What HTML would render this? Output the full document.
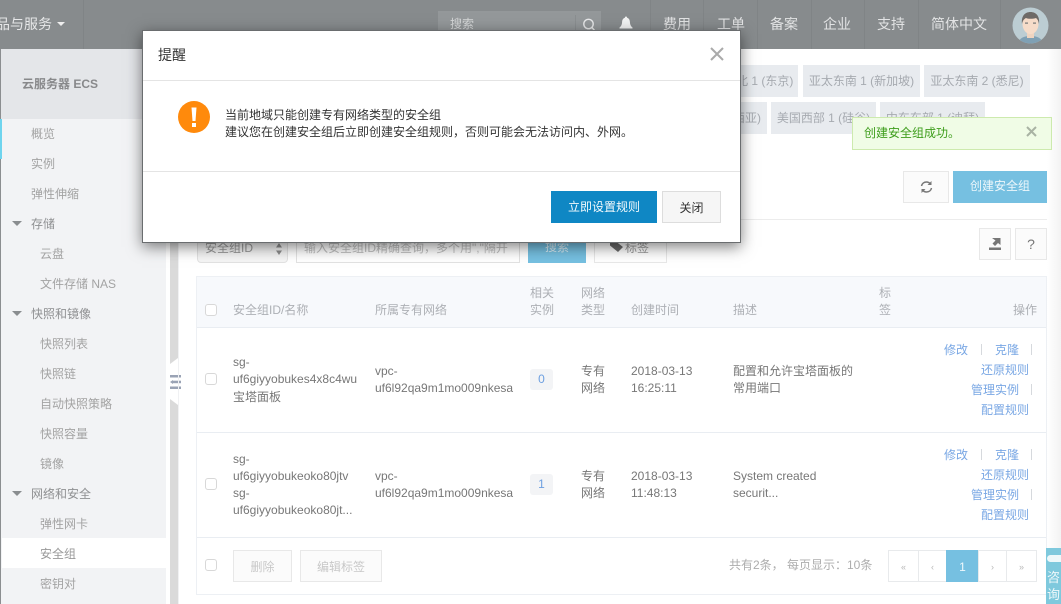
<!DOCTYPE html>
<html lang="zh"><head><meta charset="utf-8"><title>云服务器 ECS</title>
<style>
html,body{margin:0;padding:0}
body{width:1061px;height:604px;position:relative;overflow:hidden;background:#fff;font:12px/17px "Liberation Sans","Noto Sans CJK SC",sans-serif;color:#999;filter:blur(.3px)}
div,span,svg{position:absolute}
.t{white-space:nowrap}
.sep{background:#808486;width:1px;top:0;height:49px}
.nav{top:14px;font-size:14px;line-height:20px;color:#e2e3e4;white-space:nowrap}
.si{color:#a3a3a3;white-space:nowrap;line-height:17px}
.tab{background:#e8ebef;color:#a6aab0;height:32px;line-height:33px;text-align:center;white-space:nowrap;overflow:hidden}
.btn{box-sizing:border-box;border:1px solid #e8e8e8;background:#fbfbfb;text-align:center;line-height:32px}
.th{color:#adb0b5}
.td{color:#777;white-space:nowrap}
.cb{box-sizing:border-box;width:12px;height:12px;border:1px solid #d8d8d8;border-radius:3px;background:#fff;left:205px}
.l{color:#79a7e4;white-space:nowrap}
.v{background:#d6d9dd;width:1px;height:11px}
.tri{width:0;height:0;border-left:5px solid transparent;border-right:5px solid transparent;border-top:5px solid #8a8d90}
.pg{top:550px;height:32px;box-sizing:border-box;border:1px solid #e8eaec;text-align:center;line-height:32px;color:#b9b9b9;font-size:9px;background:#fff}
</style></head><body>

<!-- header -->
<div style="left:0;top:0;width:1061px;height:49px;background:#878b8d"></div>
<div class="t" style="left:-18px;top:14px;font-size:14px;line-height:20px;color:#e6e7e8">产品与服务</div>
<div style="left:57px;top:22px;width:0;height:0;border-left:4.500px solid transparent;border-right:4.500px solid transparent;border-top:4.500px solid #eee"></div>
<div class="sep" style="left:83px"></div>
<div style="left:438px;top:11px;width:163px;height:30px;background:#94989a"></div>
<div class="sep" style="left:575px;top:15px;height:25px;background:#8a8e90"></div>
<div class="t" style="left:450px;top:16px;color:#d6d8d9">搜索</div>
<svg style="left:582px;top:18px" width="14" height="14" viewBox="0 0 14 14"><circle cx="6.500" cy="6" r="4.700" fill="none" stroke="#e8e9ea" stroke-width="1.400"/><path d="M10 9.500L13 13" stroke="#e8e9ea" stroke-width="1.400"/></svg>
<svg style="left:619px;top:16px" width="14" height="16" viewBox="0 0 14 16"><path d="M7 0.500c.8 0 1.100.6 1.100 1.200 2 .6 2.700 2.200 2.800 4.300.1 2.600.9 4.400 2.600 5.500v1H.5v-1c1.700-1.100 2.500-2.900 2.600-5.500.1-2.100.8-3.700 2.800-4.300C5.900 1.100 6.200.5 7 .5z" fill="#f2f3f3"/></svg>
<div class="sep" style="left:650px"></div>
<div class="nav" style="left:663px">费用</div><div class="sep" style="left:703px"></div>
<div class="nav" style="left:717px">工单</div><div class="sep" style="left:757px"></div>
<div class="nav" style="left:770px">备案</div><div class="sep" style="left:811px"></div>
<div class="nav" style="left:823px">企业</div><div class="sep" style="left:864px"></div>
<div class="nav" style="left:877px">支持</div><div class="sep" style="left:918px"></div>
<div class="nav" style="left:931px">简体中文</div><div class="sep" style="left:1000px"></div>
<svg style="left:1012px;top:7px" width="37" height="37" viewBox="0 0 37 37"><defs><clipPath id="c"><circle cx="18.500" cy="18.500" r="18"/></clipPath></defs><circle cx="18.500" cy="18.500" r="18" fill="#bccdd3"/><g clip-path="url(#c)"><path d="M6 37c1-6 6-8 12.500-8S30 31 31 37z" fill="#7fa0b4"/><rect x="15" y="22" width="7" height="9" fill="#efd4c0"/><ellipse cx="18.500" cy="17" rx="8" ry="10" fill="#f6dcc9"/><path d="M10 17c-1-8 3-12 8.500-12S28 9 27 17c-.5-3-1.500-5-3-6-3 1-8 1-10 0-2 1-3.500 3-4 6z" fill="#6e6a67"/><rect x="13" y="15.500" width="3" height="1.200" fill="#777"/><rect x="21" y="15.500" width="3" height="1.200" fill="#777"/></g></svg>

<!-- sidebar -->
<div style="left:0;top:49px;width:1px;height:555px;background:#8b8e90"></div>
<div style="left:1px;top:49px;width:165px;height:555px;background:#f2f3f5"></div>
<div style="left:1px;top:49px;width:165px;height:70px;background:#e4e6e9"></div>
<div style="left:0;top:119px;width:2px;height:40px;background:#6fd4ee"></div>
<div class="t" style="left:22px;top:76px;font-weight:bold;color:#88898b">云服务器 ECS</div>
<div class="si" style="left:31px;top:126px">概览</div>
<div class="si" style="left:31px;top:156px">实例</div>
<div class="si" style="left:31px;top:186px">弹性伸缩</div>
<div class="tri" style="left:12px;top:221px"></div>
<div class="si" style="left:31px;top:216px;color:#8f9092">存储</div>
<div class="si" style="left:40px;top:246px">云盘</div>
<div class="si" style="left:40px;top:276px">文件存储 NAS</div>
<div class="tri" style="left:12px;top:311px"></div>
<div class="si" style="left:31px;top:306px;color:#8f9092">快照和镜像</div>
<div class="si" style="left:40px;top:336px">快照列表</div>
<div class="si" style="left:40px;top:366px">快照链</div>
<div class="si" style="left:40px;top:396px">自动快照策略</div>
<div class="si" style="left:40px;top:426px">快照容量</div>
<div class="si" style="left:40px;top:456px">镜像</div>
<div class="tri" style="left:12px;top:491px"></div>
<div class="si" style="left:31px;top:486px;color:#8f9092">网络和安全</div>
<div class="si" style="left:40px;top:516px">弹性网卡</div>
<div style="left:2px;top:538px;width:164px;height:30px;background:#fff"></div>
<div class="si" style="left:40px;top:546px;color:#999">安全组</div>
<div class="si" style="left:40px;top:576px">密钥对</div>

<!-- collapse strip -->
<div style="left:170px;top:49px;width:8px;height:555px;background:#dadada"></div>
<svg style="left:170px;top:358px" width="8" height="47" viewBox="0 0 8 47"><path d="M0 6L8 0V47L0 41z" fill="#fff"/></svg>
<svg style="left:170px;top:375px" width="11" height="14" viewBox="0 0 11 14"><rect x="0" y="0" width="11" height="2.500" fill="#9aa3b5"/><rect x="3" y="5.700" width="8" height="2.500" fill="#9aa3b5"/><path d="M0 7L3 5V9z" fill="#9aa3b5"/><rect x="0" y="11.500" width="11" height="2.500" fill="#9aa3b5"/></svg>
<div style="left:178px;top:49px;width:1px;height:555px;background:#f0f1f3"></div>

<!-- right edge -->
<div style="left:1047px;top:49px;width:14px;height:555px;background:linear-gradient(90deg,#fff,#f3f3f3)"></div>

<!-- region tabs -->
<div class="tab" style="left:700px;top:65px;width:98px;text-align:right;padding-right:6px;box-sizing:border-box">亚太东北 1 (东京)</div>
<div class="tab" style="left:803px;top:65px;width:117px">亚太东南 1 (新加坡)</div>
<div class="tab" style="left:924px;top:65px;width:106px">亚太东南 2 (悉尼)</div>
<div class="tab" style="left:700px;top:102px;width:67px;text-align:right;padding-right:6px;box-sizing:border-box">马来西亚)</div>
<div class="tab" style="left:771px;top:102px;width:105px">美国西部 1 (硅谷)</div>
<div class="tab" style="left:880px;top:102px;width:105px">中东东部 1 (迪拜)</div>

<!-- toast -->
<div style="left:852px;top:117px;width:200px;height:33px;box-sizing:border-box;background:#f0fce6;border:1px solid #cdeaae"></div>
<div class="t" style="left:864px;top:125px;color:#3d9d1b">创建安全组成功。</div>
<svg style="left:1026px;top:126px" width="11" height="11" viewBox="0 0 11 11"><path d="M1 1L10 10M10 1L1 10" stroke="#a9b3a3" stroke-width="2"/></svg>

<!-- toolbar -->
<div class="btn" style="left:903px;top:171px;width:46px;height:32px"></div>
<svg style="left:920px;top:180px" width="13" height="14" viewBox="0 0 13 14"><path d="M1.500 6C2 3.500 4 2 6.500 2c1.700 0 3 .7 4 2" fill="none" stroke="#777" stroke-width="1.500"/><path d="M11.500 1v4h-4z" fill="#777"/><path d="M11.500 8C11 10.500 9 12 6.500 12c-1.700 0-3-.7-4-2" fill="none" stroke="#777" stroke-width="1.500"/><path d="M1.500 13V9h4z" fill="#777"/></svg>
<div class="t" style="left:953px;top:171px;width:94px;height:32px;background:#76c0e1;color:#edf7fb;text-align:center;line-height:31px">创建安全组</div>
<div style="left:179px;top:219px;width:868px;height:1px;background:#ececec"></div>
<div class="btn" style="left:979px;top:228px;width:32px;height:32px"></div>
<svg style="left:988px;top:237px" width="14" height="14" viewBox="0 0 14 14"><path d="M1 13h12v-2.500H1z" fill="#777"/><path d="M4 1h8.500v7L10 6 7 9 4.500 6.500 7.500 3.500z" fill="#777"/></svg>
<div class="btn" style="left:1015px;top:228px;width:32px;height:32px;color:#777;font-size:14px;line-height:30px">?</div>

<!-- search row -->
<div style="left:197px;top:232px;width:91px;height:31px;box-sizing:border-box;border:1px solid #e2e2e2;border-radius:0 0 4px 4px;background:#f5f5f5"></div>
<div class="t" style="left:205px;top:240px;color:#999">安全组ID</div>
<svg style="left:276px;top:243px" width="6" height="12" viewBox="0 0 6 12"><path d="M3 0L6 4.500H0zM3 12L0 7.500H6z" fill="#8e8e8e"/></svg>
<div style="left:296px;top:232px;width:224px;height:31px;box-sizing:border-box;border:1px solid #e2e2e2;background:#fff"></div>
<div class="t" style="left:304px;top:240px;color:#c0c0c0">输入安全组ID精确查询，多个用","隔开</div>
<div style="left:528px;top:232px;width:58px;height:31px;background:#76c0e1;color:#d8edf6;text-align:center;line-height:31px">搜索</div>
<div style="left:594px;top:232px;width:73px;height:31px;box-sizing:border-box;border:1px solid #e8e8e8;background:#fff;color:#999;padding-left:30px;line-height:31px">标签</div>
<svg style="left:610px;top:241px" width="15" height="12" viewBox="0 0 15 12"><path d="M0 1h6.500L13 6l-5 5L0 4.500z" fill="#6b6b6b"/></svg>

<!-- table -->
<div style="left:196px;top:276px;width:851px;height:319px;box-sizing:border-box;border:1px solid #edf0f4"></div>
<div style="left:197px;top:277px;width:849px;height:50px;background:#f7f9fc"></div>
<div style="left:197px;top:327px;width:849px;height:1px;background:#e9edf2"></div>
<div style="left:197px;top:432px;width:849px;height:1px;background:#e9edf2"></div>
<div style="left:197px;top:537px;width:849px;height:1px;background:#e9edf2"></div>

<div class="cb" style="top:304px"></div>
<div class="t th" style="left:233px;top:302px">安全组ID/名称</div>
<div class="t th" style="left:375px;top:302px">所属专有网络</div>
<div class="t th" style="left:530px;top:285px">相关<br>实例</div>
<div class="t th" style="left:581px;top:285px">网络<br>类型</div>
<div class="t th" style="left:631px;top:302px">创建时间</div>
<div class="t th" style="left:733px;top:302px">描述</div>
<div class="t th" style="left:879px;top:285px">标<br>签</div>
<div class="t th" style="left:1013px;top:302px">操作</div>

<!-- row 1 -->
<div class="cb" style="top:373px"></div>
<div class="td" style="left:233px;top:354px">sg-<br>uf6giyyobukes4x8c4wu</div>
<div class="td" style="left:233px;top:389px">宝塔面板</div>
<div class="td" style="left:375px;top:363px">vpc-<br>uf6l92qa9m1mo009nkesa</div>
<div style="left:530px;top:369px;width:23px;height:21px;border-radius:3px;background:#f3f4f6;color:#6d9fe0;text-align:center;line-height:21px">0</div>
<div class="td" style="left:581px;top:363px">专有<br>网络</div>
<div class="td" style="left:631px;top:363px">2018-03-13<br>16:25:11</div>
<div class="td" style="left:733px;top:363px">配置和允许宝塔面板的<br>常用端口</div>
<div class="l" style="left:944px;top:342px">修改</div><div class="v" style="left:981px;top:344px"></div>
<div class="l" style="left:995px;top:342px">克隆</div><div class="v" style="left:1031px;top:344px"></div>
<div class="l" style="left:981px;top:362px">还原规则</div>
<div class="l" style="left:971px;top:382px">管理实例</div><div class="v" style="left:1031px;top:384px"></div>
<div class="l" style="left:981px;top:402px">配置规则</div>

<!-- row 2 -->
<div class="cb" style="top:478px"></div>
<div class="td" style="left:233px;top:451px">sg-<br>uf6giyyobukeoko80jtv<br>sg-<br>uf6giyyobukeoko80jt...</div>
<div class="td" style="left:375px;top:468px">vpc-<br>uf6l92qa9m1mo009nkesa</div>
<div style="left:530px;top:474px;width:23px;height:21px;border-radius:3px;background:#f3f4f6;color:#6d9fe0;text-align:center;line-height:21px">1</div>
<div class="td" style="left:581px;top:468px">专有<br>网络</div>
<div class="td" style="left:631px;top:468px">2018-03-13<br>11:48:13</div>
<div class="td" style="left:733px;top:468px">System created<br>securit...</div>
<div class="l" style="left:944px;top:447px">修改</div><div class="v" style="left:981px;top:449px"></div>
<div class="l" style="left:995px;top:447px">克隆</div><div class="v" style="left:1031px;top:449px"></div>
<div class="l" style="left:981px;top:467px">还原规则</div>
<div class="l" style="left:971px;top:487px">管理实例</div><div class="v" style="left:1031px;top:489px"></div>
<div class="l" style="left:981px;top:507px">配置规则</div>

<!-- footer -->
<div class="cb" style="top:559px"></div>
<div class="btn" style="left:233px;top:550px;width:59px;height:32px;color:#c8c8c8">删除</div>
<div class="btn" style="left:300px;top:550px;width:82px;height:32px;color:#c8c8c8">编辑标签</div>
<div class="t" style="left:729px;top:557px;color:#adadad">共有2条， 每页显示：10条</div>
<div class="pg" style="left:888px;width:31px">«</div>
<div class="pg" style="left:918px;width:29px">‹</div>
<div class="pg" style="left:946px;width:33px;background:#76c0e1;border-color:#76c0e1;color:#eef8fc;font-size:12px">1</div>
<div class="pg" style="left:978px;width:29px">›</div>
<div class="pg" style="left:1006px;width:31px">»</div>

<!-- consult widget -->
<div style="left:1046px;top:548px;width:15px;height:56px;background:#7fc9dd"></div>
<div style="left:1047px;top:555px;width:14px;height:7px;background:#eef8fa;border-radius:7px 0 0 7px"></div>
<div class="t" style="left:1047px;top:569px;color:#eef8fa;font-size:13px;line-height:17px">咨<br>询</div>

<!-- dialog -->
<div style="left:142px;top:30px;width:599px;height:213px;box-sizing:border-box;background:#fff;border:1px solid #6a6d6f;box-shadow:0 4px 14px rgba(0,0,0,.5)"></div>
<div class="t" style="left:158px;top:45px;font-size:14px;line-height:20px;color:#333">提醒</div>
<svg style="left:710px;top:47px" width="14" height="14" viewBox="0 0 14 14"><path d="M1 1L13 13M13 1L1 13" stroke="#aaa" stroke-width="2"/></svg>
<div style="left:143px;top:80px;width:597px;height:1px;background:#e4e4e4"></div>
<div style="left:178px;top:101px;width:32px;height:32px;border-radius:50%;background:#ff8a0c"></div>
<svg style="left:178px;top:101px" width="32" height="32" viewBox="0 0 32 32"><path d="M13.500 6.500h5L17.500 20h-3z" fill="#fff"/><rect x="14" y="22" width="4" height="4" fill="#fff"/></svg>
<div class="t" style="left:225px;top:107px;color:#333">当前地域只能创建专有网络类型的安全组</div>
<div class="t" style="left:225px;top:124px;color:#333">建议您在创建安全组后立即创建安全组规则，否则可能会无法访问内、外网。</div>
<div style="left:143px;top:171px;width:597px;height:1px;background:#e4e4e4"></div>
<div style="left:551px;top:191px;width:106px;height:32px;background:#0f87c4;color:#f2f9fc;text-align:center;line-height:32px">立即设置规则</div>
<div class="btn" style="left:662px;top:191px;width:59px;height:32px;background:#f6f6f6;border-color:#ddd;color:#333">关闭</div>

</body></html>
